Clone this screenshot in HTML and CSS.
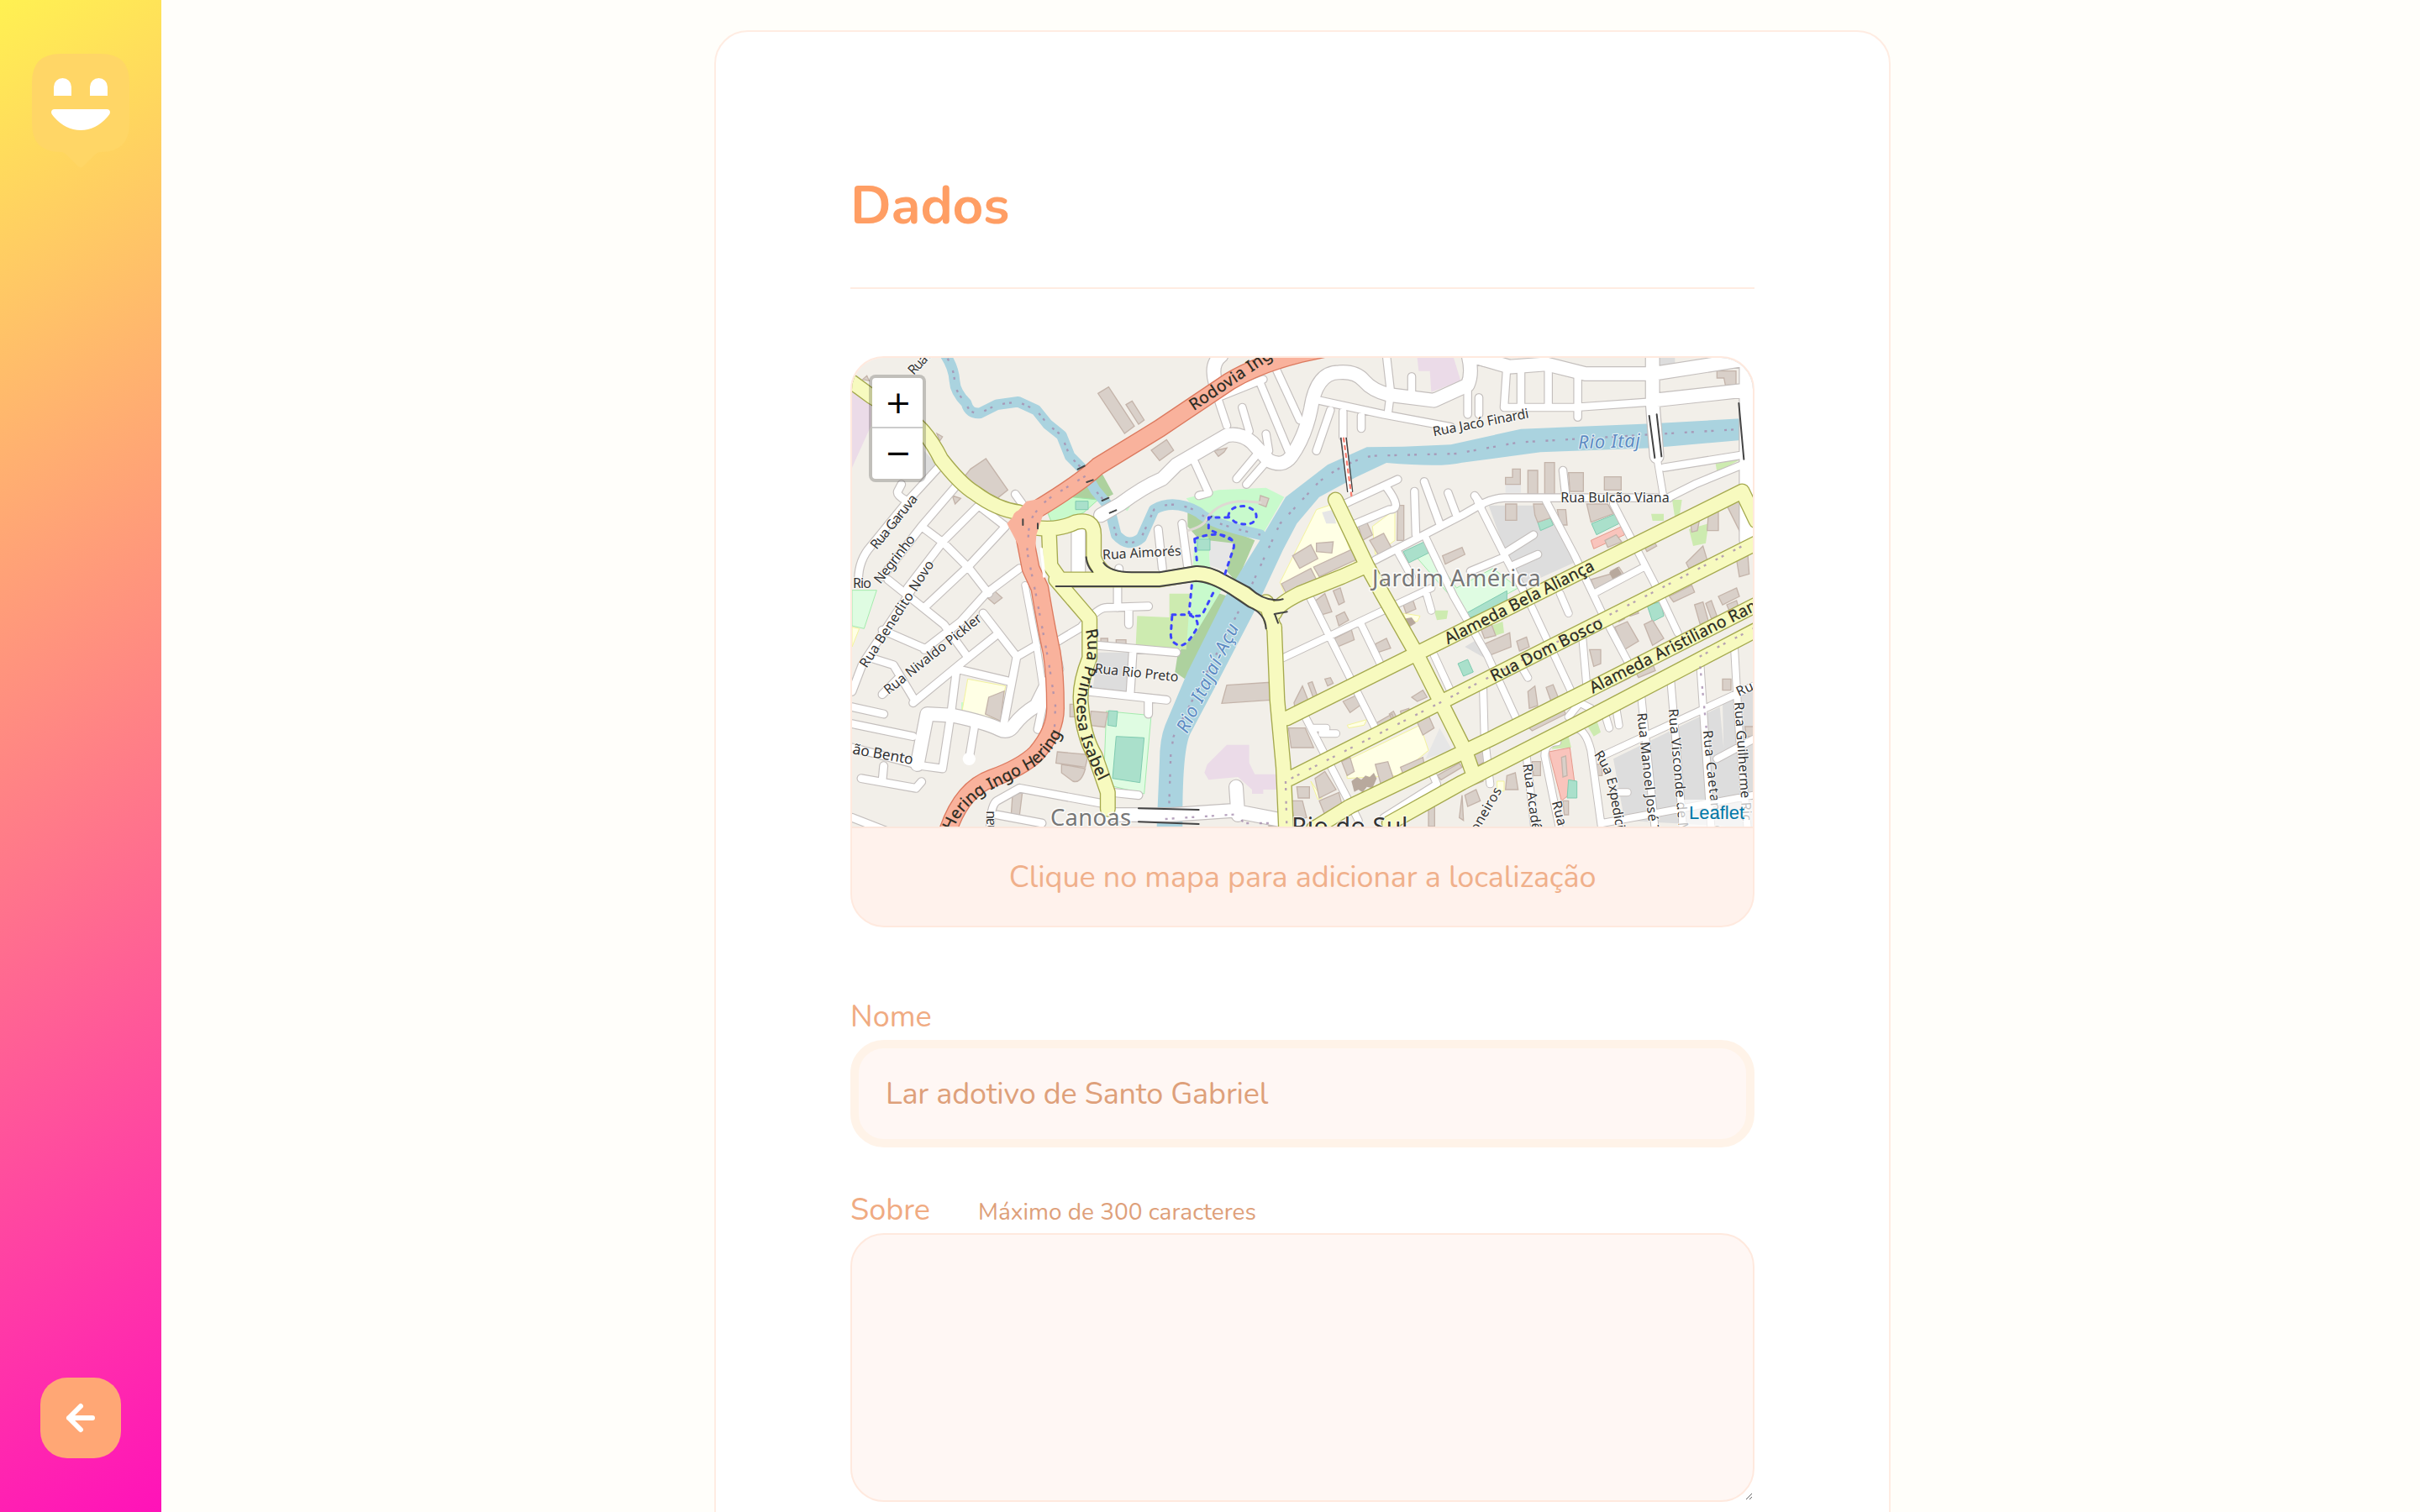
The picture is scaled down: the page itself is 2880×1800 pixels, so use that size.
FILE: index.html
```html
<!DOCTYPE html>
<html lang="pt-BR">
<head>
<meta charset="utf-8">
<title>Dados</title>
<link rel="stylesheet" href="styles.css">
</head>
<body>
<div class="page">
  <aside class="sidebar">
    <svg class="logo" width="116" height="137" viewBox="0 0 116 137" aria-hidden="true">
      <path fill="#ffd666" d="M34 0H82Q116 0 116 34V83Q116 117 82 117C78 117 76 119 73 122L61 134Q58 137 55 134L43 122C40 119 38 117 34 117Q0 117 0 83V34Q0 0 34 0Z"/>
      <path fill="#fff" d="M26 50V39.500a10.500 10.500 0 0 1 21 0V50ZM69 50V39.500a10.500 10.500 0 0 1 21 0V50ZM27 66H89Q93 66 93 70Q93 72 90 75Q76 91 58 91Q40 91 26 75Q23 72 23 70Q23 66 27 66Z"/>
    </svg>
    <button class="back" type="button" aria-label="Voltar">
      <svg width="48" height="48" viewBox="0 0 24 24" fill="none" stroke="#fff" stroke-width="3" stroke-linecap="round" stroke-linejoin="round"><path d="M19 12H5M12 19L5 12L12 5"/></svg>
    </button>
  </aside>
  <main class="content">
    <form class="card">
      <h1 class="title">Dados</h1>
      <section class="map-box">
        <div class="map">
          <svg class="tiles" viewBox="42 48 3216 1674" preserveAspectRatio="none">
            <defs>
              <path id="s1" d="M350 440L240 560L110 720Q65 770 65 840M240 560Q200 540 205 525L218 500M410 510L290 650L150 830M490 580L370 700L240 870M590 650L460 790L300 940M500 580L590 650M290 650L370 710L460 800L530 890M640 800L520 890L430 990L300 1090M170 840L370 1000L450 1110M150 1020L310 1090M510 960L630 1115L700 1075M630 1115L585 1350M555 1040L430 1140L260 1280M420 1160L610 1205M415 1160L395 1320L365 1515L290 1505M110 1120L190 1145L265 1270M42 1240L80 1140L240 900L300 800M150 1250L205 1195M42 1295L155 1320M42 1355L260 1400M42 1440L290 1505M155 1505L150 1560M75 1550L270 1585L290 1562M480 1360L460 1480M42 1690L170 1740M535 1740Q535 1645 560 1630L640 1585L940 1640M560 1680L720 1710M705 1375L735 1230M760 1070L860 1010Q920 940 950 940L1100 935M1030 940V1000M990 850V940M920 1075L1200 1100M1045 1090L1035 1250M890 1240L1165 1270M1100 1265V1320M970 1600L1065 1610M1220 640L1240 790M1135 660L1150 800M995 850V800M625 535L650 570"/>
              <path id="s2" d="M1340 170L1380 290M1510 125L1360 185M1500 140L1600 380M1550 75L1640 270M1435 225L1460 310M1520 320L1530 380M1490 390L1415 480M1520 420L1450 500M1265 420L1315 530L1280 540M1710 200L1940 250L2180 295M1750 235L1700 380M1795 240V330M1860 255V300M1950 40L1965 170L1955 250M2040 115V170M2240 150V250M1990 482L1800 570M1950 510Q2010 590 1960 590L1840 640M2050 525L2055 680M2085 490L2140 640M2170 530L2200 610M2265 540L2290 575M1910 770L2220 610L2290 570Q2330 550 2370 548H2960M2380 75L2370 225M2430 90V225M2528 80V225M2633 100V260M2280 190V250M2370 225H2620L2900 205M2580 450L2590 540M2940 440L3220 395M2960 545L3050 500L3220 430M2285 60L2300 65M2380 740L2475 680M2400 790L2490 750M2250 810L2370 760"/>
              <path id="s3" d="M2090 690L2190 900L2310 1110L2415 1340M2275 560L2375 760L2460 920L2610 1240M2520 560L2620 750L2720 960L2810 1130M2760 570L2910 860L2990 1030M1680 910L1820 1190L1910 1370M1580 1120L1940 950L2110 870M1855 990L1930 1145M1660 1330L1820 1640L1850 1700M1690 1370H1735M1720 1390H1770M2120 1110L2180 1240M1940 1690L2130 1570L2115 1535M2090 880L2110 950M1990 740L2040 830M2295 1220L2300 1400L2320 1570M2420 1130L2455 1190M2570 890L2600 960M2650 1050L2665 1220M2860 1260L2910 1740M2965 1200L3010 1740M3070 1140L3110 1740M3192 1080L3210 1400L3240 1740M2720 1470L3260 1220M2620 1370Q2660 1370 2680 1450L2720 1740M2560 1420Q2515 1420 2515 1470L2570 1740M2450 1470L2480 1740M2720 1710L3260 1610M2600 1330L2640 1280L2680 1300M2730 1320L2745 1370M2770 1300L2780 1360M2780 1600H2810M2690 890L2860 800M3130 1480L3260 1410"/>
              <path id="w1" d="M930 610L1000 570Q1080 510 1150 480Q1170 460 1200 430L1380 325Q1430 315 1470 350L1530 415Q1580 440 1610 400Q1660 330 1680 230Q1700 100 1780 100Q1840 95 1870 130Q1900 165 1960 180L2120 200L2240 145Q2260 100 2240 30M1360 40Q1320 70 1340 140M275 1500L310 1320L400 1325Q520 1350 570 1375Q600 1390 620 1360Q650 1320 700 1290L740 1210M960 1680H1180L1400 1665L1580 1700M1413 1580L1420 1680M850 660V820M2250 40L2390 80L2520 70L2660 105H2900L3220 55M3235 40V700M2900 200L3220 165M2900 50V210L2915 400"/>
              <path id="w2" d="M660 860L700 1070L730 1270M755 1020L785 1160M2915 400L2940 550"/>
              <path id="y" d="M42 135L110 185L250 270Q310 310 360 410Q430 500 480 530Q560 590 640 600M700 655Q780 665 840 635Q905 620 905 680L905 760Q930 840 1030 840H1140L1270 818Q1320 818 1370 850L1440 890Q1490 930 1550 945M745 665L750 790L785 840M770 840H1040M770 840L890 980V1120Q850 1220 860 1290Q868 1400 910 1470L955 1600V1660M1550 1010V1020L1560 1270L1582 1510L1592 1740M1550 960Q1560 930 1640 890L1790 830L1880 790M1768 555L1880 790L1935 890L2060 1110L2140 1270L2230 1450L2255 1520M1520 920L1550 1020M1595 1335L2040 1113L3220 525L3270 630M1605 1550L2140 1280L3270 710M1690 1730L1820 1650L2320 1410L2660 1240L3270 930M1960 1710L2220 1565L2640 1350L3060 1130L3270 1020"/>
              <path id="r" d="M660 610L700 590Q850 500 920 435L1140 300L1390 132Q1490 72 1640 34L1760 8M645 620L680 800L712 870Q735 1010 755 1100Q768 1180 768 1300Q768 1380 700 1460Q650 1510 540 1550Q430 1590 380 1750"/>
              <path id="creek" d="M370 30Q405 80 408 130Q410 170 450 210Q460 250 500 245L560 215L635 205L700 235L740 285L790 325L820 400L870 450L910 520L960 580L985 680Q1030 730 1075 690L1120 590Q1190 550 1280 600Q1320 640 1500 680"/>
              <path id="t2" d="M400 1740Q430 1660 520 1600Q600 1560 690 1510Q780 1440 805 1345"/>
              <path id="t3" d="M875 1020Q895 1090 865 1180Q830 1290 855 1390Q880 1480 945 1600"/>
              <path id="t4" d="M2690 1465Q2740 1530 2750 1620L2780 1790"/>
            </defs>
            <rect x="42" y="48" width="3216" height="1674" fill="#f2efe9"/>
            <g class="areas">
              <path fill="#ebdbe8" d="M42 150L110 205V290L42 440ZM2060 48H2190L2215 130L2110 170L2105 95H2065ZM1310 1500L1380 1430H1460V1495L1480 1535H1560V1590H1510V1605H1470V1590L1420 1545L1315 1555L1300 1530ZM1470 110L1500 105L1490 125Z"/>
              <path fill="#ddd" d="M300 380L350 435L300 485ZM920 1100H1040V1240H900ZM2315 575H2510L2640 770L2420 870ZM2905 48H2980V85L2940 90L2905 82ZM2760 1480L3140 1295L3180 1722L2800 1700ZM3150 1280L3260 1230V1722H3160ZM2280 1050L2230 1080L2300 1120Z"/>
              <path fill="#add19e" d="M815 545L935 462L975 535L930 560ZM1240 600L1480 700L1415 850L1240 650ZM1340 885L1385 900L1230 1195L1195 1170L1205 1105L1290 990Z"/>
              <path fill="#c8facc" stroke="#9de8a6" d="M740 600L825 545L920 555L870 600L780 637H755Z"/>
              <path fill="#c8facc" d="M1235 550L1350 520L1520 512L1585 545L1510 675L1310 640ZM1265 690H1315L1320 790L1360 880L1270 1030Q1220 1100 1180 1060V960H1250ZM432 1278L493 1282L490 1318L432 1307ZM1000 580H1035L1025 595Z"/>
              <path fill="#cdebb0" d="M1175 890H1250L1235 1090L1055 1075L1060 970L1175 975ZM3125 425L3215 410L3130 455ZM2970 555H3005L2995 620H2980ZM3030 660L3100 640L3090 710L3045 720ZM2310 1010L2365 990L2370 1030L2310 1050ZM2660 1350L2700 1340L2715 1385L2690 1400ZM2560 1410L2600 1400L2610 1440L2540 1445ZM2120 950L2170 950L2165 980L2130 985ZM2895 605H2940V630H2900Z"/>
              <path fill="#dffce2" stroke="#a4ecae" d="M42 878H130L85 1015L42 1005ZM950 1310L1110 1325L1085 1605L940 1570ZM2040 740L2090 710L2200 870L2330 800L2420 870L2240 970Z"/>
              <path fill="#ffffe5" stroke="#f3f39c" d="M42 1010L68 1015L42 1080ZM455 1195L590 1220L565 1340L435 1310ZM1570 850L1700 590L1760 570L1840 790L1590 900ZM1900 650L1980 590V700L1910 750ZM1800 1490L2070 1360L2100 1450L1990 1540L1810 1550ZM1680 1560L1720 1620L1705 1625ZM1810 1360L1880 1340L1870 1360L1815 1370ZM2010 960L2070 970L2060 990L2020 985ZM2345 1560H2370V1595H2345Z"/>
              <path fill="#e6e6e6" d="M1315 700L1405 710L1380 810L1320 790ZM1720 600L1760 590L1770 640L1735 640ZM2375 500H2430V530H2375ZM2140 1370L2185 1450L2090 1480Z"/>
              <path fill="#f9c4bc" stroke="#e69a8c" d="M2530 1455L2605 1440L2625 1590L2575 1630ZM2680 700L2790 650L2800 680L2690 730Z"/>
              <path fill="#aae0cb" stroke="#7fcbb0" d="M985 1400L1085 1405L1070 1565L972 1550ZM958 1308L990 1310L985 1365L955 1360ZM2490 635L2535 620L2545 645L2500 665ZM2682 640L2770 605L2780 640L2700 680ZM2010 740L2085 705L2100 745L2030 780ZM2235 960L2380 880V930L2250 975ZM2205 1140L2240 1125L2260 1170L2225 1185ZM2880 930L2930 920L2940 970L2900 990ZM840 560H885V590H840ZM1275 695H1320V735H1275ZM2600 1555L2630 1560V1620H2595Z"/>
            </g>
            <path class="building" d="M445 470L465 445L520 408L598 520L560 550L470 500ZM920 175L958 152L1050 292L1015 318ZM1020 215L1042 202L1085 270L1065 285ZM1110 378L1165 340L1190 378L1140 415ZM80 125L95 112L103 130ZM345 318L365 330L355 345ZM400 540L430 550L410 570ZM520 900L550 880L578 905L550 927ZM530 1260L585 1238L572 1345L518 1320ZM930 1050H955V1065H930ZM985 1055H1020V1072H985ZM895 1310L955 1315L945 1367L890 1360ZM820 1285H850V1330H820ZM775 1455L885 1465L875 1510L770 1495ZM790 1500L875 1515Q860 1570 830 1560L790 1530ZM615 1610L650 1600L640 1680H610ZM1335 380L1380 370L1370 385L1350 400ZM1500 540L1530 550L1520 580L1495 570ZM1380 1217L1535 1207V1270L1362 1282ZM1615 755L1680 715L1705 765L1640 800ZM1700 710L1760 705L1755 745L1700 740ZM1575 855L1680 800L1710 860L1595 895ZM1690 795L1830 730L1840 770L1710 830ZM1850 650L1880 635L1900 680L1865 700ZM1890 700L1940 675L1970 730L1920 750ZM1990 575H2012V700H1988ZM2150 755L2220 725L2230 750L2160 785ZM2375 475H2400V445H2428V500H2375ZM2455 450H2490V535H2455ZM2515 422H2550V535H2515ZM2600 458H2653V525H2605ZM2728 473H2788V520H2728ZM2375 570H2415V628H2375ZM2475 570H2520L2535 620L2490 635L2480 610ZM2560 590H2590L2595 645H2570ZM2665 570H2740L2760 605L2680 635ZM3130 95H3198V145H3160L3155 120H3130ZM3165 575L3205 550L3260 650L3220 685ZM3100 600L3135 590L3135 665H3095ZM3035 630L3070 615L3060 665L3040 670ZM2680 840L2750 820L2770 860L2700 890ZM2750 810L2780 795L2800 825L2770 840ZM3020 780L3080 720L3095 770L3030 800ZM3200 770L3240 750L3245 820L3210 830ZM2730 700L2770 680L2790 705L2740 725ZM2870 720L2905 705L2915 720L2880 740ZM1690 920L1730 890L1755 955L1720 965ZM1760 880L1785 870L1800 920L1780 930ZM1770 970L1800 955L1815 985L1780 1005ZM1765 1050L1825 1020L1835 1055L1775 1080ZM1910 1070L1950 1050L1965 1085L1920 1100ZM2010 930L2045 915L2055 945L2020 960ZM2285 1010L2325 1000L2340 1040L2300 1050ZM2300 1070L2390 1030L2395 1080L2320 1110ZM2415 1060L2450 1045L2460 1080L2425 1095ZM1620 1280L1650 1220L1670 1270L1625 1305ZM1670 1210L1685 1205L1705 1260L1690 1265ZM1730 1195L1750 1190L1760 1210L1740 1220ZM1795 1275L1850 1250L1855 1290L1820 1315ZM1600 1370H1660L1690 1440H1610ZM2040 1260L2080 1235L2095 1260L2060 1275ZM1900 1360L1970 1320L1980 1350L1925 1380ZM2060 1350L2100 1325L2120 1370L2080 1395ZM1790 1490L1820 1475L1835 1525L1810 1540ZM1910 1500L1955 1490L1975 1550L1930 1570ZM2000 1510L2080 1475L2085 1500L2010 1535ZM1695 1550L1730 1525L1770 1590L1710 1620ZM1630 1580H1675V1620H1635ZM1610 1630H1650L1665 1690L1620 1700ZM1710 1630L1780 1600L1790 1640L1730 1680ZM1530 1680H1570V1720H1530ZM2100 1650H2122V1722H2100ZM2130 1540L2210 1495L2220 1510L2145 1555ZM2260 1465L2300 1450L2310 1485L2275 1505ZM2455 1240L2480 1220L2490 1290L2460 1300ZM2520 1225L2545 1215L2575 1290L2550 1310ZM2450 1360L2580 1300L2590 1320L2470 1380ZM2380 1540L2410 1530L2420 1590H2375ZM2230 1610L2270 1590L2285 1630L2240 1650ZM2675 1090H2715V1140L2690 1150ZM2765 1010L2810 990L2850 1060L2800 1090ZM2870 1000L2900 985L2940 1050L2900 1075ZM2750 1200L2810 1170L2820 1190L2760 1220ZM2840 1170L2900 1140L2910 1165L2850 1190ZM2960 900L3040 860L3050 885L2975 920ZM3050 930L3080 920L3100 990L3070 1000ZM3090 925L3110 915L3130 970L3110 980ZM3135 900L3200 870L3210 900L3150 930ZM3165 930L3200 915L3210 950L3180 965ZM3150 1195H3180V1235H3150ZM3230 1365H3260V1400H3235ZM2470 1490H2500V1540H2475ZM2690 1500H2720V1540H2700ZM2220 1610L2225 1700L2210 1690ZM2580 1630H2600V1680H2585ZM2575 1475L2590 1470L2595 1540L2580 1545ZM2770 960L2790 955L2800 980L2780 990ZM2810 935L2840 925L2850 960L2820 970ZM2750 740L2800 720L2810 740L2760 760ZM2000 1310L2030 1300L2035 1320L2005 1330ZM1960 1320L1975 1310L1985 1330L1970 1340ZM2210 1560L2290 1540L2295 1560L2215 1590Z"/>
            <path fill="#b8a99d" d="M1825 1560L1845 1545L1860 1555L1875 1540L1890 1545L1905 1530L1915 1550L1900 1585L1880 1580L1865 1600L1850 1590L1835 1598ZM2010 980L2040 975L2055 995L2030 1010ZM2745 815L2775 795L2790 820L2760 840Z"/>
            <path fill="#aad3df" d="M1380 890L1510 680L1590 545L1740 430L1880 367L2010 365L2180 358L2430 302L2900 283L3215 265V342L2900 370L2500 385L2220 422Q2150 440 1950 423L1840 475L1710 545L1630 640L1580 735L1475 960L1340 1220L1250 1390Q1220 1450 1222 1722H1130L1140 1490Q1140 1410 1160 1360L1240 1170Z"/>
            <use href="#creek" class="line" stroke="#aad3df" stroke-width="38"/>
            <use href="#creek" class="line boundary"/>
            <path class="line boundary" d="M1172 1710L1180 1460L1190 1400L1450 900L1570 640L1710 490Q1800 420 1900 398L2200 390L2420 350L3260 300"/>
            <g class="line" stroke="#c4bfbd"><use href="#s1" stroke-width="33"/><use href="#s2" stroke-width="32"/><use href="#s3" stroke-width="30"/><use href="#w1" stroke-width="54"/><use href="#w2" stroke-width="28"/></g>
            <g class="line" stroke="#fff"><use href="#s1" stroke-width="26"/><use href="#s2" stroke-width="25"/><use href="#s3" stroke-width="24"/><use href="#w1" stroke-width="47"/><use href="#w2" stroke-width="22"/></g>
            <circle cx="460" cy="1480" r="23" fill="#fff"/>
            <use href="#r" class="line" stroke="#dc7a5f" stroke-width="66"/>
            <use href="#y" class="line" stroke="#a5a94e" stroke-width="57"/>
            <use href="#y" class="line" stroke="#f7fabf" stroke-width="49"/>
            <use href="#r" class="line" stroke="#f9b29c" stroke-width="58"/>
            <path fill="#f9b29c" d="M595 640L665 560L750 545L720 620L700 680L690 820Z"/>
            <path class="line" stroke="#fff" stroke-width="10" d="M718 730L728 828"/>
            <path class="line boundary" d="M875 470L760 540Q700 580 675 640L667 740L700 900L745 1140L768 1290L765 1370M1160 1695L1420 1678L1440 1710H1560"/>
            <path class="line boundary" d="M1610 1550L2140 1280L3240 710M1590 1560L1594 1722M3068 1115L3260 1015M3070 1150L3092 1370"/>
            <path class="line" stroke="#444" stroke-width="6" d="M848 446L872 434M880 492L902 484M935 558L958 548M962 602L985 592M652 625V645M705 640V658M770 864H1140L1270 845Q1320 847 1388 890L1458 937Q1518 960 1520 1015M900 812Q880 790 878 760M940 780Q960 812 1040 814H1140L1270 792Q1320 790 1375 823L1460 868Q1520 925 1580 910M1550 963L1595 955M1552 965L1563 995M2888 255L2908 405M2915 250L2932 400M3208 210L3226 410M1065 1657L1280 1662M1065 1705L1280 1713M1304 632L1325 615M1788 335L1812 525M1806 335L1828 525"/>
            <path class="line" stroke="#fff" stroke-width="14" d="M1797 335L1820 525"/>
            <path class="line" stroke="#fa8072" stroke-width="7" stroke-dasharray="12 16" d="M1797 335L1825 540"/>
            <path class="line" stroke="#ded9d3" stroke-width="9" d="M1240 665Q1300 650 1310 620Q1350 560 1440 560L1500 565"/>
            <path class="line park-trail" d="M1385 615Q1390 575 1445 578Q1490 590 1485 620Q1470 655 1410 635ZM1385 618H1315V660L1400 700M1265 695Q1310 675 1360 680Q1410 690 1405 725L1370 830M1265 695L1275 790M1255 860L1245 960Q1280 980 1295 960L1335 880M1185 965H1240Q1280 975 1275 1010Q1240 1075 1215 1075Q1180 1070 1180 1035Z"/>
            <g class="label">
              <text transform="translate(262 112) rotate(-47)" textLength="100">Rua I</text>
              <text transform="translate(130 735) rotate(-51)" textLength="235">Rua Garuva</text>
              <text x="45" y="870" textLength="66">Rio</text>
              <text transform="translate(143 858) rotate(-52)" textLength="205">Negrinho</text>
              <text transform="translate(94 1158) rotate(-57)" textLength="445">Rua Benedito Novo</text>
              <text transform="translate(172 1252) rotate(-38.500)" textLength="430">Rua Nivaldo Pickler</text>
              <text transform="translate(42 1462) rotate(10)" textLength="218" class="big">ão Bento</text>
              <text transform="translate(937 768) rotate(-3)" textLength="281">Rua Aimorés</text>
              <text transform="translate(907 1173) rotate(6)" textLength="300">Rua Rio Preto</text>
              <text transform="translate(2197 313) rotate(-11)" textLength="348" x="-80" y="0">Rua Jacó Finardi</text>
              <text x="2572" y="563" textLength="388">Rua Bulcão Viana</text>
              <text transform="translate(1262 238) rotate(-34)" textLength="440" class="road">Rodovia Ingo H</text>
              <text class="road"><textPath href="#t2" textLength="540">Hering Ingo Hering</textPath></text>
              <text class="road"><textPath href="#t3" textLength="560">Rua Princesa Isabel</textPath></text>
              <text transform="translate(2170 1072) rotate(-27)" textLength="590" class="road">Alameda Bela Aliança</text>
              <text transform="translate(2333 1205) rotate(-26.500)" textLength="440" class="road">Rua Dom Bosco</text>
              <text transform="translate(2687 1247) rotate(-27)" textLength="745" class="road">Alameda Aristiliano Ramos</text>
              <text transform="translate(3208 1258) rotate(-25)" textLength="90">Rua</text>
              <text transform="translate(2845 1318) rotate(84)" textLength="430">Rua Manoel José T</text>
              <text transform="translate(2957 1303) rotate(85)" textLength="450">Rua Visconde de M</text>
              <text transform="translate(3080 1380) rotate(84)" textLength="370">Rua Caetano d</text>
              <text transform="translate(3192 1278) rotate(86)" textLength="425">Rua Guilherme Ric</text>
              <text><textPath href="#t4" textLength="310">Rua Expedicio</textPath></text>
              <text transform="translate(2437 1500) rotate(82)" textLength="240">Rua Acadê</text>
              <text transform="translate(2540 1635) rotate(75)" textLength="90">Rua</text>
              <text transform="translate(2275 1745) rotate(-60)" textLength="175">oneiros</text>
              <text transform="translate(550 1745) rotate(-90)" textLength="80">nau</text>
              <text x="1899" y="863" textLength="602" class="place">Jardim América</text>
              <text x="750" y="1720" textLength="288" class="place">Canoas</text>
              <text x="1612" y="1752" textLength="414" class="city">Rio do Sul</text>
              <text x="2635" y="373" textLength="222" transform="rotate(-2 2635 373)" class="water">Rio Itaj</text>
              <text transform="translate(1238 1392) rotate(-64)" textLength="425" class="water">Rio Itajaí-Açu</text>
            </g>
          </svg>
          <div class="zoom"><span class="zoom-btn">+</span><span class="zoom-btn">−</span></div>
          <div class="attribution">Leaflet</div>
        </div>
        <div class="map-hint"><span>Clique no mapa para adicionar a localização</span></div>
      </section>
      <label class="label-row" for="nome"><span>Nome</span></label>
      <input class="field" id="nome" value="Lar adotivo de Santo Gabriel">
      <label class="label-row label-about" for="sobre"><span>Sobre</span><span class="hint">Máximo de 300 caracteres</span></label>
      <textarea class="area" id="sobre"></textarea>
    </form>
  </main>
</div>
</body>
</html>
```
FILE: styles.css
```css
* { box-sizing: border-box; margin: 0; padding: 0; }
body { background: #fffefa; font-family: "Nunito", "Lato", sans-serif; color: #f0ab82; }
.page { display: flex; height: 1800px; overflow: hidden; }
.sidebar {
  flex: none; width: 192px; height: 1800px; padding: 64px 0;
  display: flex; flex-direction: column; align-items: center; justify-content: space-between;
  background: linear-gradient(329.54deg, #ff12b9 0%, #fff152 100%);
}
.back {
  width: 96px; height: 96px; border: 0; border-radius: 32px; background: #ffa775;
  display: flex; align-items: center; justify-content: center;
}
.content { flex: 1; display: flex; justify-content: center; align-items: flex-start; padding: 36px 0 0 28px; }
.card {
  width: 1400px; height: 2400px; padding: 160px; display: flex; flex-direction: column;
  background: #fff; border: 2px solid #ffece2; border-radius: 40px;
}
.title {
  height: 146px; padding: 3px 0 49px; line-height: 88px; font-size: 64px; font-weight: 700;
  color: #ff9e64; border-bottom: 2px solid #ffece2; letter-spacing: -0.200px;
}
.map-box {
  margin-top: 80px; height: 680px; display: flex; flex-direction: column; overflow: hidden;
  border: 2px solid #ffe9de; border-radius: 40px; background: #fff2ec;
}
.map { position: relative; height: 558px; }
.tiles { display: block; width: 1072px; height: 558px; }
.line { fill: none; stroke-linecap: round; stroke-linejoin: round; }
.boundary { stroke: #a58cae; stroke-width: 7; stroke-dasharray: 9 15 9 38; stroke-linecap: butt; opacity: .8; }
.park-trail { stroke: #3c44ff; stroke-width: 9; stroke-dasharray: 12 20; }
.areas { stroke-width: 3; }
.building { fill: #d9d0c9; stroke: #c4b4aa; stroke-width: 4; }
.label text {
  font-family: "Noto Sans", "Open Sans", sans-serif; font-size: 48px; fill: #333;
  stroke: rgba(255, 255, 255, .65); stroke-width: 7; paint-order: stroke; stroke-linejoin: round;
}
.label .big { font-size: 52px; }
.label .road { font-size: 58px; stroke: #2b2b22; stroke-width: .8; fill: #2b2b22; }
.label .place { font-size: 82px; fill: #777; stroke: rgba(255, 255, 255, .75); stroke-width: 10; }
.label .city { font-size: 86px; }
.label .water { font-size: 66px; font-style: italic; fill: #5d8bc3; }
.zoom {
  position: absolute; left: 20px; top: 20px; width: 68px; height: 128px;
  border: 4px solid rgba(0, 0, 0, .2); border-radius: 8px; background: #fff; background-clip: padding-box;
}
.zoom-btn {
  display: block; height: 60px; line-height: 58px; padding-left: 2px; text-align: center; color: #000;
  font-family: "DejaVu Sans", sans-serif; font-size: 38px;
}
.zoom-btn:first-child { border-bottom: 2px solid #ccc; }
.attribution {
  position: absolute; right: 0; bottom: 0; width: 88px; height: 32px; padding-left: 12px;
  background: rgba(255, 255, 255, .7); color: #0078a8;
  font-family: "Liberation Sans", sans-serif; font-size: 22px; line-height: 32px;
}
.map-hint {
  flex: 1; display: flex; align-items: center; justify-content: center;
  border-top: 2px solid #fbe6dc; font-size: 36px; letter-spacing: -0.100px; color: #f0b08b;
}
.label-row { display: flex; align-items: baseline; margin-top: 80px; height: 54px; line-height: 54px; font-size: 36px; }
.label-about { margin-top: 48px; }
.hint { margin-left: 57px; font-size: 28px; color: #dea07a; }
.field, .area {
  width: 1076px; border-radius: 40px; background: #fff7f4; color: #dea07a;
  font-family: inherit; font-size: 36px; outline: none;
}
.field { height: 128px; padding: 0 32px; border: 10px solid #fff3e8; letter-spacing: -0.150px; }
.area { height: 320px; border: 2px solid #ffe9de; padding: 32px; resize: vertical; }
```
